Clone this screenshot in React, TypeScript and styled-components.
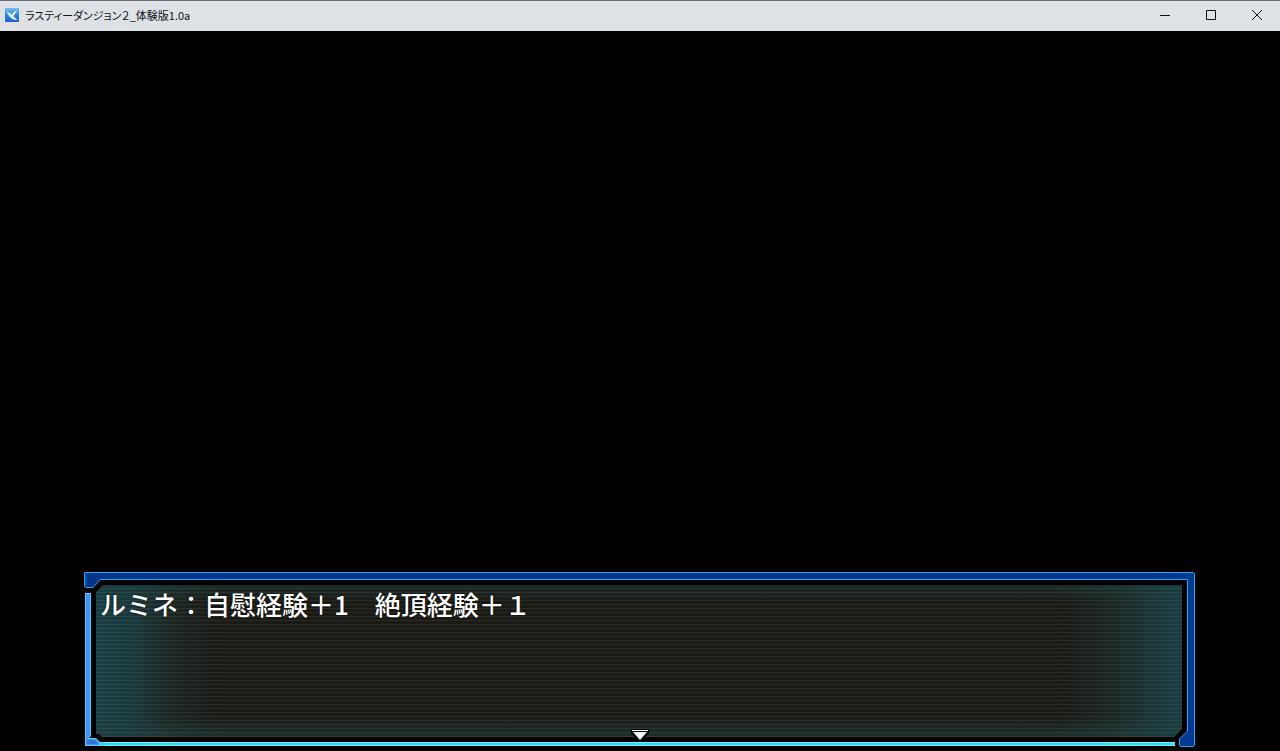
import React from "react";
import styled, { createGlobalStyle } from "styled-components";

const GlobalStyle = createGlobalStyle`
  *, *::before, *::after { box-sizing: border-box; }
  body { margin: 0; background: #000; }
`;

const Window = styled.div`
  display: flex;
  flex-direction: column;
  min-height: 100vh;
  background: #000;
`;

const TitleBar = styled.header`
  display: flex;
  align-items: center;
  height: 31px;
  padding: 0 0 2px 5px;
  border-top: 1px solid #6a6c72;
  background: #dee1e6;
`;

const Title = styled.h1`
  flex: 1;
  margin: 0 0 0 6px;
  font: 400 11px/16px "Noto Sans CJK JP", sans-serif;
  font-feature-settings: "palt";
  color: #111;
`;

const CaptionButton = styled.button`
  display: flex;
  align-items: center;
  justify-content: center;
  width: 46px;
  height: 28px;
  padding: 0;
  border: 0;
  background: transparent;
  color: #111;
  &:hover { background: #cdd0d6; }
`;

const Stage = styled.main`
  display: flex;
  flex: 1;
  flex-direction: column;
  justify-content: flex-end;
  padding: 0 85px 4px 84px;
`;

const MessageWindow = styled.section`
  display: grid;
  grid-template-columns: 20px 1fr 20px;
  grid-template-rows: 24px 1fr 20px;
  min-height: 175px;
`;

const MessagePanel = styled.div`
  grid-area: 1 / 1 / -1 / -1;
  margin: 13px 13px 10px 12px;
  padding: 1px 4px;
  clip-path: polygon(7px 0, 100% 0, 100% calc(100% - 8px), calc(100% - 8px) 100%, 6px 100%, 3px calc(100% - 3px), 0 calc(100% - 3px), 0 7px);
  background:
    repeating-linear-gradient(transparent 0 3px, rgba(130, 160, 150, 0.13) 3px 4px),
    linear-gradient(rgba(30, 62, 62, 0.5), transparent 16px, transparent calc(100% - 20px), rgba(30, 62, 62, 0.6)),
    linear-gradient(90deg, #193e43, #1a3a3d 34px, #1c2623 76px, #1b1a15 124px, #1b1a15 calc(100% - 124px), #1c2623 calc(100% - 72px), #1a3a3d calc(100% - 16px), #193e43);
`;

const Message = styled.p`
  margin: 0;
  font: 500 26px/36px "Noto Sans CJK JP", sans-serif;
  color: #fff;
  text-shadow: 0 0 2px #000;
`;

const Corner = styled.svg<{ $row: number; $column: number }>`
  grid-row: ${(p) => p.$row};
  grid-column: ${(p) => p.$column};
  display: block;
`;

const TopEdge = styled.div`
  grid-area: 1 / 2;
  height: 8px;
  border-top: 1px solid #20a8f4;
  border-bottom: 1px solid #20a8f4;
  background: #043488;
`;

const RightEdge = styled.div`
  grid-area: 2 / 3;
  justify-self: end;
  width: 8px;
  border-left: 1px solid #20a8f4;
  border-right: 1px solid #20a8f4;
  background: #043a94;
`;

const LeftEdge = styled.div`
  grid-area: 2 / 1;
  width: 6px;
  margin-left: 1px;
  border-left: 1px solid #54c8fc;
  border-right: 1px solid #54c8fc;
  background: #4294f4;
`;

const BottomEdge = styled.div`
  grid-area: 3 / 2;
  align-self: end;
  height: 4px;
  margin-bottom: 1px;
  border-top: 1px solid #68f4fc;
  border-bottom: 1px solid #68f4fc;
  background: #3cd4f4;
`;

const NextButton = styled.button`
  z-index: 1;
  grid-area: 1 / 1 / -1 / -1;
  justify-self: center;
  align-self: end;
  width: 18px;
  height: 12px;
  margin-bottom: 6px;
  padding: 0;
  border: 0;
  background: transparent;
  svg { display: block; }
`;

function AppIcon() {
  return (
    <svg width="14" height="14" viewBox="0 0 14 14" aria-hidden="true">
      <defs>
        <linearGradient id="app-tile" x1="0" y1="0" x2="0" y2="1">
          <stop offset="0" stopColor="#70bdf2" />
          <stop offset="0.45" stopColor="#2d8be0" />
          <stop offset="1" stopColor="#2459cf" />
        </linearGradient>
      </defs>
      <rect width="14" height="14" rx="1" fill="url(#app-tile)" />
      <path d="M1.5 3.5L5 5L7.5 7.5L12.5 12L10 12L6.5 10.5L4 8Z" fill="#dff2ff" />
      <path d="M12.5 2L8.5 4.5L6.5 7.5L8 8.5Z" fill="#fff" />
    </svg>
  );
}

export default function App() {
  return (
    <Window>
      <GlobalStyle />
      <TitleBar>
        <AppIcon />
        <Title>ラスティーダンジョン２_体験版1.0a</Title>
        <CaptionButton aria-label="最小化">
          <svg width="10" height="10"><path d="M0 5.5H10" stroke="currentColor" /></svg>
        </CaptionButton>
        <CaptionButton aria-label="最大化">
          <svg width="10" height="10"><path d="M.5 .5H9.5V9.5H.5Z" fill="none" stroke="currentColor" /></svg>
        </CaptionButton>
        <CaptionButton aria-label="閉じる">
          <svg width="10" height="10"><path d="M0 0L10 10M10 0L0 10" stroke="currentColor" /></svg>
        </CaptionButton>
      </TitleBar>
      <Stage>
        <MessageWindow>
          <MessagePanel>
            <Message>ルミネ：自慰経験＋1　絶頂経験＋１</Message>
          </MessagePanel>
          <Corner $row={1} $column={1} width="20" height="24" aria-hidden="true">
            <path d="M20 .5H.5V14.5L1.5 15.5H9L16.5 7.5H20V.5Z" fill="#043488" />
            <path d="M20 .5H.5V14.5L1.5 15.5H9L16.5 7.5H20" fill="none" stroke="#20a8f4" />
            <path d="M2 2V13" stroke="#0c68c8" />
            <rect x="1" y="21" width="6" height="3" fill="#54c8fc" />
            <rect x="2" y="22" width="4" height="2" fill="#4294f4" />
          </Corner>
          <TopEdge />
          <Corner $row={1} $column={3} width="20" height="24" aria-hidden="true">
            <path d="M0 .5H18.5L19.5 1.5V24H12.5V7.5H0Z" fill="#043a90" />
            <path d="M0 .5H18.5L19.5 1.5V24M12.5 24V7.5H0" fill="none" stroke="#20a8f4" />
          </Corner>
          <LeftEdge />
          <RightEdge />
          <Corner $row={3} $column={1} width="20" height="20" aria-hidden="true">
            <path d="M5 20V11H12L18 16V20Z" fill="#000" />
            <path d="M1 0H7V9L5 11H12L16 15H20V19H1Z" fill="#54c8fc" />
            <path d="M2 0H6V9L4 11V12H12L15 16L16 18H2Z" fill="#4294f4" />
            <path d="M3 13H11L14 17H3Z" fill="#3474d4" />
            <path d="M15 17H20" stroke="#3cd4f4" strokeWidth="2" />
          </Corner>
          <BottomEdge />
          <Corner $row={3} $column={3} width="20" height="20" aria-hidden="true">
            <path d="M12.5 0V4L4.5 12V18.5L5.5 19.5H18.5L19.5 18.5V0Z" fill="#043a94" />
            <path d="M12.5 0V4L4.5 12V18.5L5.5 19.5H18.5L19.5 18.5V0" fill="none" stroke="#20a8f4" />
          </Corner>
          <NextButton aria-label="次へ">
            <svg width="18" height="12">
              <path d="M0 0H18V4L10 12H8L0 4Z" fill="#000" />
              <path d="M1 1H17V2H1ZM2 3H16L9 11Z" fill="#fff" />
            </svg>
          </NextButton>
        </MessageWindow>
      </Stage>
    </Window>
  );
}
